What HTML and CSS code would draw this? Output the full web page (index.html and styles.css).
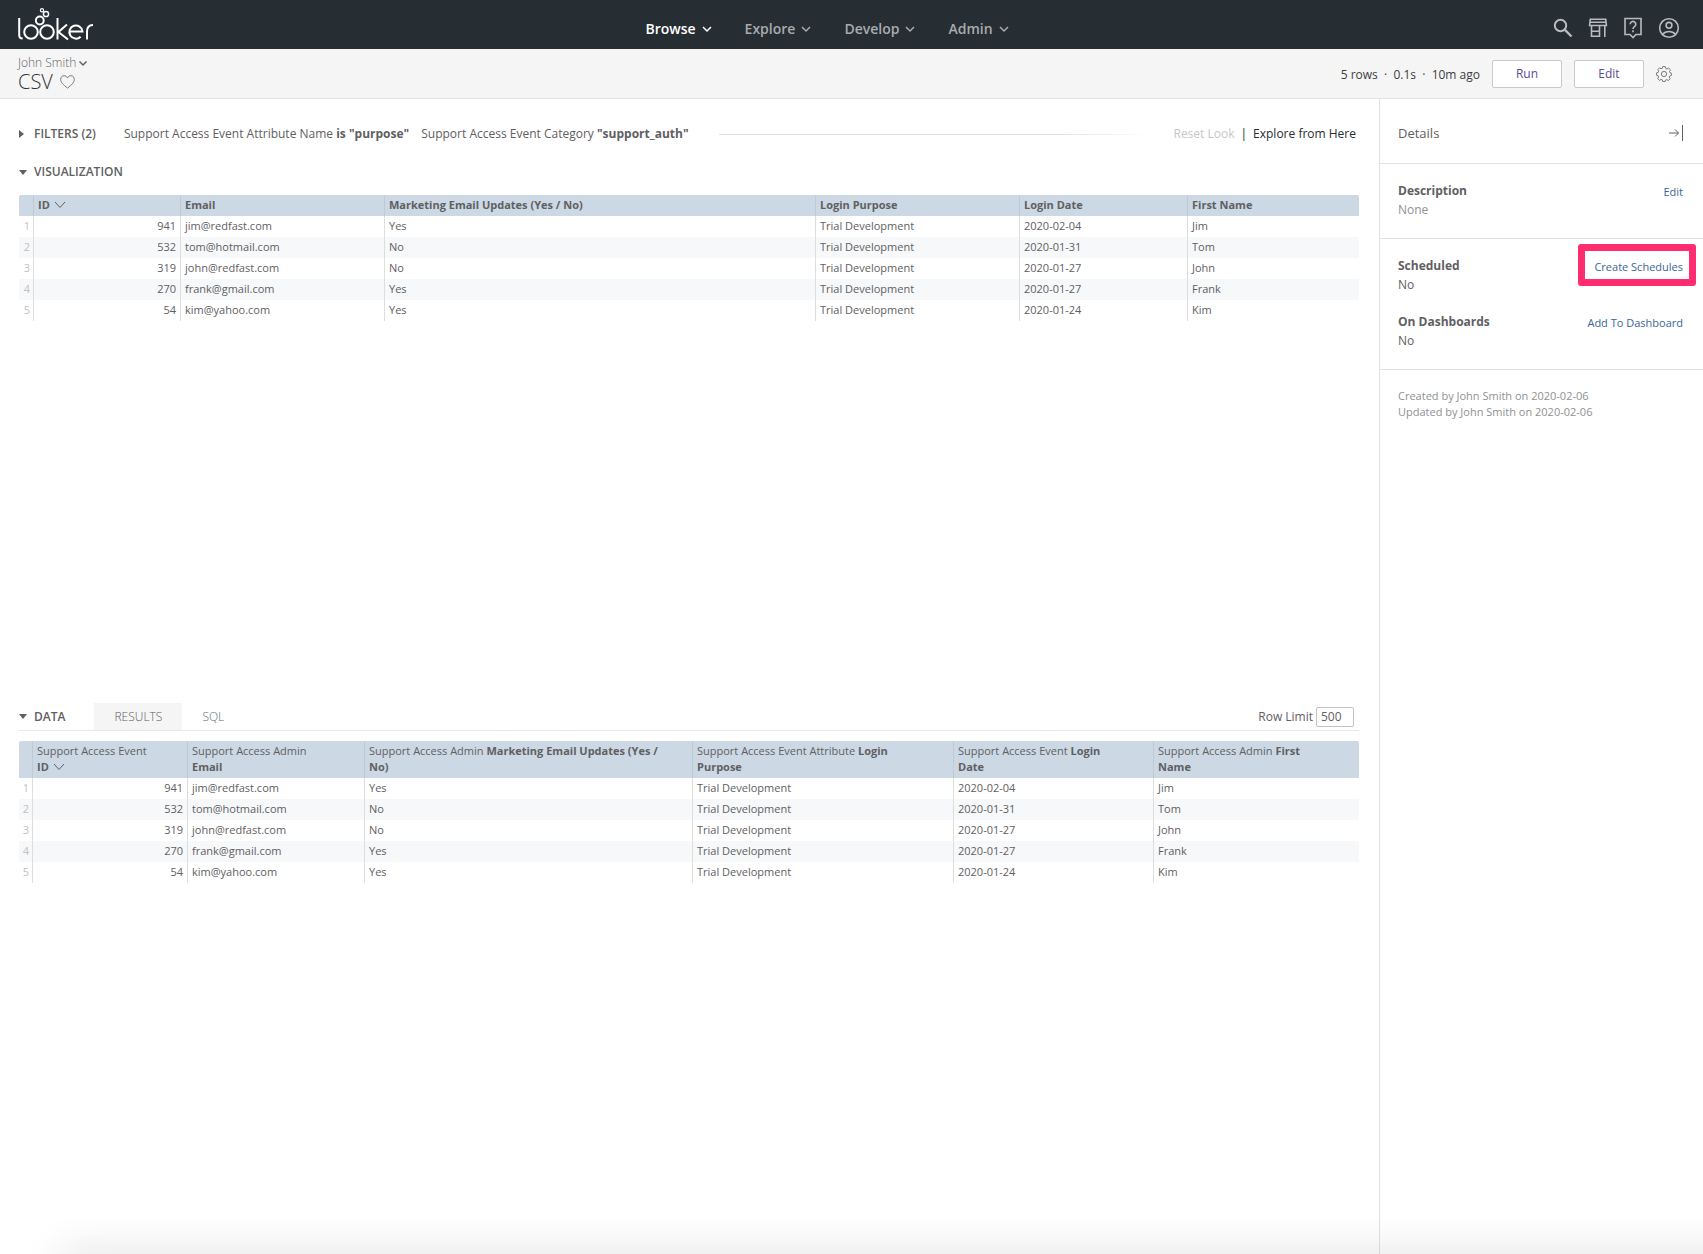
FILE: index.html
```html
<!DOCTYPE html>
<html lang="en">
<head>
    <meta charset="UTF-8">
    <meta name="viewport" content="width=device-width, initial-scale=1.0">
    <title>CSV - Looker</title>
    <link rel="stylesheet" href="styles.css">
</head>
<body>
    <header class="topbar">
        <a href="#" class="logo" aria-label="Looker">
            <svg width="76" height="34" viewBox="0 0 76 34" stroke-width="2">
                <path d="M1.200 10v17q0 3.500 3.500 3.500"/>
                <circle cx="13" cy="24" r="6.800"/>
                <circle cx="29" cy="24" r="6.800"/>
                <circle cx="21.800" cy="12.500" r="3.900"/>
                <circle cx="28" cy="6" r="2.600" stroke-width="1.500"/>
                <circle cx="24" cy="2.300" r="1.600" stroke-width="1.200"/>
                <path d="M39.500 10v21.500M49 16.500l-8.500 7.500 9.500 7.500"/>
                <path d="M51.500 23.500h13a6.600 6.600 0 1 0-1.900 5.200"/>
                <path d="M69 31.500v-8q0-6.500 6-6.500"/>
            </svg>
        </a>
        <nav class="main-nav">
            <button type="button" class="nav-item active">Browse <svg class="chevron" viewBox="0 0 10 10"><path d="M1 3l4 4 4-4"/></svg></button>
            <button type="button" class="nav-item">Explore <svg class="chevron" viewBox="0 0 10 10"><path d="M1 3l4 4 4-4"/></svg></button>
            <button type="button" class="nav-item">Develop <svg class="chevron" viewBox="0 0 10 10"><path d="M1 3l4 4 4-4"/></svg></button>
            <button type="button" class="nav-item">Admin <svg class="chevron" viewBox="0 0 10 10"><path d="M1 3l4 4 4-4"/></svg></button>
        </nav>
        <div class="top-icons">
            <button type="button" class="icon-btn" aria-label="Search">
                <svg width="20" height="20" viewBox="0 0 20 20"><circle cx="7.500" cy="7.500" r="5.700"/><path d="M11.700 11.700l6.800 6.800" stroke-width="2.400"/></svg>
            </button>
            <button type="button" class="icon-btn thin" aria-label="Marketplace">
                <svg width="20" height="20" viewBox="0 0 20 20"><path d="M2.300 1.300h15.400l.7 6.200H1.600zM3.500 7.500v10.800h8V7.500M4 13.200h7M16.800 7.500V19M2 4.300h16"/></svg>
            </button>
            <button type="button" class="icon-btn thin" aria-label="Help">
                <svg width="20" height="22" viewBox="0 0 20 22"><path d="M2 1.500h16v16h-5l-3 3-3-3H2z"/><path d="M7.200 7.200a2.800 2.800 0 1 1 4.500 2.200c-1 .8-1.700 1.200-1.700 2.600M10 13.300v2"/></svg>
            </button>
            <button type="button" class="icon-btn thin" aria-label="Account">
                <svg width="22" height="22" viewBox="0 0 22 22"><circle cx="11" cy="11" r="9.300"/><circle cx="11" cy="8.300" r="2.900"/><path d="M4.500 17.500c2-2.500 4-3 6.500-3s4.500.5 6.500 3"/></svg>
            </button>
        </div>
    </header>

    <div class="look-header">
        <div class="look-title">
            <button type="button" class="space">John Smith <svg class="chevron" viewBox="0 0 10 10"><path d="M1.500 3.500l3.500 3.500 3.500-3.500"/></svg></button>
            <div class="title-row">
                <h1>CSV</h1>
                <button type="button" class="heart" aria-label="Favorite">
                    <svg width="15" height="14" viewBox="0 0 15 14"><path d="M7.500 13C3.500 10 .7 7.500.7 4.400.7 2.200 2.200.7 4.100.7c1.500 0 2.600.8 3.400 2.200C8.300 1.500 9.400.7 10.900.7c1.900 0 3.400 1.500 3.400 3.700 0 3.100-2.800 5.600-6.800 8.600z"/></svg>
                </button>
            </div>
        </div>
        <div class="look-actions">
            <span class="status">5 rows &nbsp;·&nbsp; 0.1s &nbsp;·&nbsp; 10m ago</span>
            <button type="button" class="btn">Run</button>
            <button type="button" class="btn">Edit</button>
            <button type="button" class="gear" aria-label="Settings">
                <svg width="16" height="16" viewBox="0 0 16 16"><circle cx="8" cy="8" r="2.600"/><path d="M6.700.6h2.600l.5 1.900 1.100.5 1.700-1 1.900 1.800-1 1.700.4 1.200 1.500.4v2.300l-1.700.6-.5 1.100 1 1.600-1.800 1.800-1.700-.9-1.100.4-.5 1.600H6.800l-.5-1.700-1.200-.5-1.600.9-1.800-1.700.9-1.700-.4-1.100-1.600-.5V6.800l1.600-.5.5-1.100-.9-1.600 1.700-1.700 1.600.9 1.200-.5z"/></svg>
            </button>
        </div>
    </div>

    <div class="layout">
        <main class="content">
            <section class="filters">
                <button type="button" class="section-title"><span class="caret right"></span>FILTERS (2)</button>
                <p class="filter-list">
                    <span>Support Access Event Attribute Name <b>is "purpose"</b></span>
                    <span>Support Access Event Category <b>"support_auth"</b></span>
                </p>
                <div class="rule"></div>
                <div class="look-links">
                    <a href="#" class="disabled">Reset Look</a>
                    <span>|</span>
                    <a href="#">Explore from Here</a>
                </div>
            </section>

            <section class="visualization">
                <button type="button" class="section-title"><span class="caret"></span>VISUALIZATION</button>
                <table class="grid">
                    <colgroup>
                        <col style="width: 14px">
                        <col style="width: 147px">
                        <col style="width: 204px">
                        <col style="width: 431px">
                        <col style="width: 204px">
                        <col style="width: 168px">
                        <col style="width: 172px">
                    </colgroup>
                    <thead>
                        <tr>
                            <th></th>
                            <th>ID <svg class="sort" viewBox="0 0 12 8"><path d="M1 1l5 5.500L11 1"/></svg></th>
                            <th>Email</th>
                            <th>Marketing Email Updates (Yes / No)</th>
                            <th>Login Purpose</th>
                            <th>Login Date</th>
                            <th>First Name</th>
                        </tr>
                    </thead>
                    <tbody>
                        <tr><td>1</td><td>941</td><td>jim@redfast.com</td><td>Yes</td><td>Trial Development</td><td>2020-02-04</td><td>Jim</td></tr>
                        <tr><td>2</td><td>532</td><td>tom@hotmail.com</td><td>No</td><td>Trial Development</td><td>2020-01-31</td><td>Tom</td></tr>
                        <tr><td>3</td><td>319</td><td>john@redfast.com</td><td>No</td><td>Trial Development</td><td>2020-01-27</td><td>John</td></tr>
                        <tr><td>4</td><td>270</td><td>frank@gmail.com</td><td>Yes</td><td>Trial Development</td><td>2020-01-27</td><td>Frank</td></tr>
                        <tr><td>5</td><td>54</td><td>kim@yahoo.com</td><td>Yes</td><td>Trial Development</td><td>2020-01-24</td><td>Kim</td></tr>
                    </tbody>
                </table>
            </section>

            <section class="data">
                <div class="data-bar">
                    <button type="button" class="section-title"><span class="caret"></span>DATA</button>
                    <div class="tabs">
                        <button type="button" class="tab selected">RESULTS</button>
                        <button type="button" class="tab">SQL</button>
                    </div>
                    <div class="row-limit">
                        <label for="rowLimit">Row Limit</label>
                        <input type="text" id="rowLimit" value="500">
                    </div>
                </div>
                <table class="grid">
                    <colgroup>
                        <col style="width: 13px">
                        <col style="width: 155px">
                        <col style="width: 177px">
                        <col style="width: 328px">
                        <col style="width: 261px">
                        <col style="width: 200px">
                        <col style="width: 206px">
                    </colgroup>
                    <thead>
                        <tr>
                            <th></th>
                            <th><span>Support Access Event</span><br>ID <svg class="sort" viewBox="0 0 12 8"><path d="M1 1l5 5.500L11 1"/></svg></th>
                            <th><span>Support Access Admin</span><br>Email</th>
                            <th><span>Support Access Admin</span> Marketing Email Updates (Yes /<br>No)</th>
                            <th><span>Support Access Event Attribute</span> Login<br>Purpose</th>
                            <th><span>Support Access Event</span> Login<br>Date</th>
                            <th><span>Support Access Admin</span> First<br>Name</th>
                        </tr>
                    </thead>
                    <tbody>
                        <tr><td>1</td><td>941</td><td>jim@redfast.com</td><td>Yes</td><td>Trial Development</td><td>2020-02-04</td><td>Jim</td></tr>
                        <tr><td>2</td><td>532</td><td>tom@hotmail.com</td><td>No</td><td>Trial Development</td><td>2020-01-31</td><td>Tom</td></tr>
                        <tr><td>3</td><td>319</td><td>john@redfast.com</td><td>No</td><td>Trial Development</td><td>2020-01-27</td><td>John</td></tr>
                        <tr><td>4</td><td>270</td><td>frank@gmail.com</td><td>Yes</td><td>Trial Development</td><td>2020-01-27</td><td>Frank</td></tr>
                        <tr><td>5</td><td>54</td><td>kim@yahoo.com</td><td>Yes</td><td>Trial Development</td><td>2020-01-24</td><td>Kim</td></tr>
                    </tbody>
                </table>
            </section>
        </main>

        <aside class="details">
            <div class="details-head">
                <h2>Details</h2>
                <button type="button" class="collapse" aria-label="Hide details">
                    <svg width="16" height="16" viewBox="0 0 16 16"><path d="M1 8h9.500M7 4.500L10.500 8 7 11.500M14.500 0v16"/></svg>
                </button>
            </div>
            <div class="details-block">
                <div class="detail">
                    <div><h3>Description</h3><p class="muted">None</p></div>
                    <a href="#">Edit</a>
                </div>
            </div>
            <div class="details-block">
                <div class="detail">
                    <div><h3>Scheduled</h3><p>No</p></div>
                    <a href="#" class="highlight">Create Schedules</a>
                </div>
                <div class="detail">
                    <div><h3>On Dashboards</h3><p>No</p></div>
                    <a href="#">Add To Dashboard</a>
                </div>
            </div>
            <div class="details-meta">
                <p>Created by John Smith on 2020-02-06</p>
                <p>Updated by John Smith on 2020-02-06</p>
            </div>
        </aside>
    </div>
    <div class="bottom-shadow"></div>
</body>
</html>
```
FILE: styles.css
```css
* {
    box-sizing: border-box;
}
body {
    margin: 0;
    min-height: 100vh;
    display: flex;
    flex-direction: column;
    font-family: "Open Sans", "Noto Sans", sans-serif;
    font-size: 12px;
    line-height: 16px;
    color: #5f6062;
    background: #fff;
}
h1, h2, h3, p {
    margin: 0;
}
a {
    color: #3a6697;
    text-decoration: none;
}
button {
    padding: 0;
    border: none;
    background: none;
    font: inherit;
    color: inherit;
    cursor: pointer;
}
svg {
    fill: none;
    stroke: currentColor;
}

/* top bar */
.topbar {
    display: grid;
    grid-template-columns: 1fr auto 1fr;
    align-items: center;
    height: 49px;
    padding: 0 23px 0 18px;
    background: #262d33;
}
.logo {
    color: #fff;
}
.logo svg {
    display: block;
}
.main-nav {
    display: flex;
    gap: 33px;
    padding: 8px 44px 0 0;
}
.nav-item {
    display: flex;
    align-items: center;
    gap: 6px;
    font-size: 14px;
    font-weight: 600;
    line-height: 20px;
    color: #a9abad;
}
.nav-item.active {
    color: #fff;
}
.chevron {
    width: 10px;
    height: 10px;
    stroke-width: 1.5;
}
.top-icons {
    display: flex;
    justify-content: flex-end;
    align-items: center;
    gap: 15px;
    padding-top: 6px;
}
.icon-btn {
    display: flex;
    color: #b9bbbe;
}
.icon-btn svg {
    stroke-width: 2;
}
.icon-btn.thin svg {
    stroke-width: 1.6;
}

/* look header */
.look-header {
    display: flex;
    justify-content: space-between;
    height: 50px;
    padding: 0 31px 0 18px;
    background: #f5f5f5;
    border-bottom: 1px solid #e1e2e3;
}
.look-title {
    padding-top: 6px;
}
.space {
    display: flex;
    align-items: center;
    gap: 2px;
    font-weight: 300;
    color: #5f6062;
}
.title-row {
    display: flex;
    align-items: center;
    gap: 7px;
}
.title-row h1 {
    font-size: 20px;
    font-weight: 300;
    line-height: 22px;
    color: #333;
}
.heart {
    display: flex;
    color: #77787b;
}
.look-actions {
    display: flex;
    align-items: center;
    gap: 12px;
}
.status {
    padding-top: 2px;
    color: #3c3d3f;
}
.btn {
    width: 70px;
    height: 28px;
    border: 1px solid #c8cacc;
    border-radius: 2px;
    background: #fff;
    color: #5b4a94;
}
.gear {
    display: flex;
    color: #77787b;
}

/* main area */
.layout {
    flex: 1;
    display: flex;
}
.content {
    flex: 1;
    padding: 25px 20px 0 19px;
}
.section-title {
    display: flex;
    align-items: center;
    font-weight: 600;
}
.caret {
    width: 15px;
}
.caret::before {
    content: "";
    display: block;
    width: 0;
    border: 4px solid transparent;
    border-top: 5px solid #5f6062;
    border-bottom: 0;
}
.caret.right::before {
    border: 4px solid transparent;
    border-left: 5px solid #5f6062;
    border-right: 0;
}
.filters {
    display: flex;
    align-items: center;
    height: 20px;
}
.filter-list {
    display: flex;
    gap: 12px;
    margin-left: 28px;
}
.rule {
    flex: 1;
    height: 1px;
    margin: 0 24px 0 30px;
    background: linear-gradient(to right, #e1e2e3 80%, #fff);
}
.look-links {
    display: flex;
    gap: 6px;
    padding-right: 3px;
    color: #262d33;
}
.look-links a {
    color: #262d33;
}
.look-links .disabled {
    color: #c6c8ca;
}
.visualization {
    height: 559px;
    padding-top: 20px;
}
.visualization .grid {
    margin-top: 15px;
}

/* tables */
.grid {
    width: 100%;
    table-layout: fixed;
    border-collapse: separate;
    border-spacing: 0;
    font-size: 11px;
}
.grid th, .grid td {
    padding: 2px 4px 3px;
    border-left: 1px solid #dcdee0;
    text-align: left;
    white-space: nowrap;
}
.grid th {
    background: #ccd8e4;
    border-left-color: #bccbd9;
    font-weight: 700;
}
.grid th span {
    font-weight: 400;
}
.grid th:first-child, .grid td:first-child {
    padding: 2px 3px 3px 0;
    border-left: none;
    text-align: right;
    color: #bfc1c3;
}
.grid th:first-child {
    border-top-left-radius: 2px;
}
.grid th:last-child {
    border-top-right-radius: 2px;
}
.grid td:nth-child(2) {
    text-align: right;
}
.grid tbody tr:nth-child(even) {
    background: #f6f8fa;
}
.sort {
    width: 12px;
    height: 8px;
    margin-left: 1px;
}

/* data section */
.data-bar {
    display: flex;
    align-items: center;
    height: 28px;
    margin-bottom: 10px;
    border-bottom: 1px solid #e6e7e8;
}
.tabs {
    display: flex;
    align-self: stretch;
    margin-left: 29px;
}
.tab {
    padding: 0 20px;
    font-weight: 300;
    color: #5f6d73;
}
.tab.selected {
    background: #f5f5f5;
    color: #5f6062;
}
.row-limit {
    display: flex;
    align-items: center;
    gap: 3px;
    margin-left: auto;
    padding-right: 5px;
}
.row-limit input {
    width: 38px;
    height: 20px;
    padding: 0 4px;
    border: 1px solid #c1c3c5;
    border-radius: 2px;
    font: inherit;
    color: inherit;
}

/* details sidebar */
.details {
    width: 324px;
    border-left: 1px solid #e1e2e3;
}
.details-head {
    display: flex;
    justify-content: space-between;
    align-items: center;
    height: 65px;
    padding: 4px 19px 0 18px;
    border-bottom: 1px solid #e1e2e3;
}
.details-head h2 {
    font-size: 13px;
    font-weight: 400;
}
.collapse {
    display: flex;
}
.details-block {
    display: flex;
    flex-direction: column;
    gap: 18px;
    padding: 17px 20px 19px 18px;
    border-bottom: 1px solid #e1e2e3;
}
.detail {
    display: flex;
    justify-content: space-between;
    align-items: flex-start;
}
.detail h3 {
    font-size: 12px;
    font-weight: 700;
    line-height: 19px;
}
.detail p {
    line-height: 19px;
}
.detail .muted {
    color: #8f9194;
}
.detail a {
    font-size: 11px;
    line-height: 21px;
}
.highlight {
    position: relative;
}
.highlight::after {
    content: "";
    position: absolute;
    inset: -12px -13px -9px -16px;
    border: 7px solid #ff2d6f;
    border-radius: 3px;
}
.details-meta {
    padding: 18px;
    font-size: 11px;
    color: #8f9194;
}

/* shadow of the panel docked under the window */
.bottom-shadow {
    position: fixed;
    left: 60px;
    right: -60px;
    bottom: -20px;
    height: 20px;
    box-shadow: 0 0 40px rgba(0, 0, 0, 0.16);
    pointer-events: none;
}
```
